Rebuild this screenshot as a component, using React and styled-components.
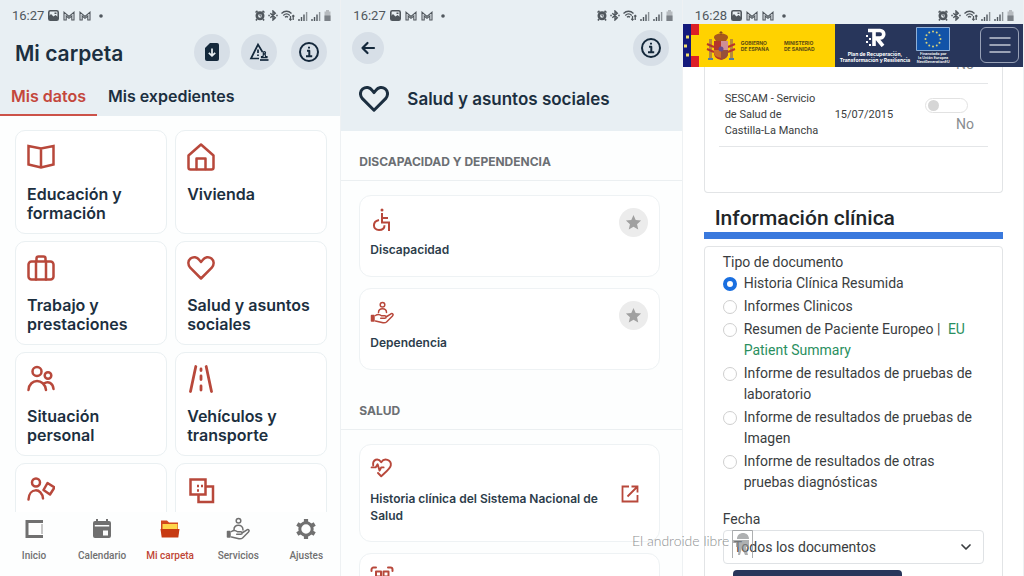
import React, { useState } from 'react';
import styled, { createGlobalStyle } from 'styled-components';

const GlobalStyle = createGlobalStyle`
  * {
    box-sizing: border-box;
  }
  body {
    margin: 0;
    background: #fdfefe;
    font-family: Inter, "Liberation Sans", sans-serif;
    color: #1c2f40;
  }
  button, input, select {
    font: inherit;
    color: inherit;
    margin: 0;
  }
  svg {
    display: block;
    flex: none;
  }
`;

const Screens = styled.main`
  position: relative;
  display: grid;
  grid-template-columns: repeat(3, minmax(0, 1fr));
  height: 100vh;
  overflow: hidden;
`;

const Screen = styled.section`
  display: flex;
  flex-direction: column;
  min-height: 0;
  overflow: hidden;
  border-right: 1px solid #eef1f3;
`;

const Status = styled.div`
  display: flex;
  align-items: center;
  justify-content: space-between;
  height: ${(p) => (p.$short ? '24px' : '30px')};
  padding: ${(p) => (p.$short ? '7px' : '1px')} 9px 0 12px;
  flex: none;
  background: #e8eff3;
  color: #50575d;
  font: 13px/16px Roboto, sans-serif;
`;

const StatusGroup = styled.div`
  display: flex;
  align-items: center;
  gap: ${(p) => p.$gap || '4px'};
`;

const Header = styled.header`
  background: #e8eff3;
  flex: none;
`;

const TitleRow = styled.div`
  display: flex;
  align-items: center;
  gap: 11px;
  padding: 4px 13px 0 15px;
`;

const Title = styled.h1`
  flex: 1;
  margin: 0;
  padding-top: 4px;
  font-size: 21px;
  line-height: 28px;
  font-weight: 600;
`;

const RoundButton = styled.button`
  display: grid;
  place-items: center;
  width: ${(p) => p.$size || '36px'};
  height: ${(p) => p.$size || '36px'};
  padding: 0;
  border: 0;
  border-radius: 50%;
  flex: none;
  background: ${(p) => (p.$gray ? '#ececec' : '#d7dfe7')};
  color: ${(p) => (p.$gray ? '#a0a0a0' : '#14283b')};
  cursor: pointer;
`;

const InfoSlot = styled.div`
  padding-left: 3px;
`;

const Tabs = styled.nav`
  display: flex;
  padding-top: 6px;
`;

const Tab = styled.button`
  height: 40px;
  padding: 2px 11px 0;
  border: 0;
  border-bottom: 2px solid ${(p) => (p.$active ? '#cc5249' : 'transparent')};
  background: none;
  color: ${(p) => (p.$active ? '#c4473c' : '#1c2f40')};
  font-size: 16px;
  line-height: 20px;
  font-weight: 600;
  cursor: pointer;
`;

const Tiles = styled.div`
  flex: 1;
  min-height: 0;
  overflow: hidden;
  display: grid;
  grid-template-columns: 1fr 1fr;
  grid-auto-rows: max-content;
  gap: 7px 8px;
  padding: 14px 13px 0 15px;
`;

const Tile = styled.button`
  display: flex;
  flex-direction: column;
  gap: 14px;
  min-height: 104px;
  padding: 12px 11px 9px;
  border: 1px solid #eaf0f2;
  border-radius: 10px;
  background: #fff;
  text-align: left;
  font-size: 16px;
  line-height: 19px;
  font-weight: 600;
  cursor: pointer;
  svg {
    color: #b8483b;
  }
`;

const BottomNav = styled.nav`
  display: grid;
  grid-template-columns: repeat(5, 1fr);
  height: 64px;
  flex: none;
  background: #fdfefe;
`;

const NavButton = styled.button`
  display: flex;
  flex-direction: column;
  align-items: center;
  gap: 7px;
  padding: 5px 0 0;
  border: 0;
  background: none;
  color: ${(p) => (p.$active ? '#bf4535' : '#707070')};
  font: 500 10px/16px Roboto, sans-serif;
  white-space: nowrap;
  cursor: pointer;
`;

const BackRow = styled.div`
  display: flex;
  align-items: center;
  justify-content: space-between;
  padding: 0 13px 0 11px;
`;

const AreaTitle = styled.div`
  display: flex;
  align-items: center;
  gap: 18px;
  padding: 17px 18px 16px;
`;

const AreaName = styled.h1`
  margin: 0;
  font-size: 17px;
  line-height: 32px;
  font-weight: 600;
`;

const GroupName = styled.h2`
  margin: 0;
  padding: 22px 18px 9px;
  border-bottom: 1px solid #ebeff1;
  color: #6b6f73;
  font-size: 12px;
  line-height: 18px;
  font-weight: 700;
`;

const Group = styled.div`
  display: flex;
  flex-direction: column;
  flex: none;
  gap: 11px;
  padding: 14px 22px 10px 18px;
`;

const Entry = styled.article`
  display: flex;
  align-items: ${(p) => (p.$center ? 'center' : 'flex-start')};
  justify-content: space-between;
  min-height: 82px;
  padding: 12px ${(p) => (p.$center ? '20px' : '11px')} 17px 10px;
  border: 1px solid #eef2f4;
  border-radius: 12px;
  background: #fff;
`;

const EntryText = styled.div`
  display: flex;
  flex-direction: column;
  gap: 9px;
  color: #b8483b;
`;

const EntryName = styled.h3`
  margin: 0;
  color: #2d3d4b;
  font-size: 12px;
  line-height: 17px;
  font-weight: 600;
`;

const ExternalLink = styled.a`
  padding-top: 6px;
  color: #b8483b;
`;

const Banner = styled.header`
  display: flex;
  height: 43px;
  flex: none;
  background: #28365b;
`;

const Government = styled.div`
  display: flex;
  align-items: center;
  width: 136px;
  background: #ffd200;
  color: #5b4a12;
  font-size: 5px;
  line-height: 6px;
  font-weight: 700;
`;

const Ministry = styled.span`
  white-space: pre-line;
  margin-left: ${(p) => p.$space};
`;

const Logo = styled.div`
  display: flex;
  flex-direction: column;
  align-items: center;
  color: #fff;
  font-family: ${(p) => (p.$tiny ? 'Roboto, sans-serif' : 'inherit')};
  font-size: ${(p) => (p.$tiny ? '4px' : '5px')};
  line-height: ${(p) => (p.$tiny ? '4px' : '6px')};
  font-weight: ${(p) => (p.$tiny ? '500' : '700')};
  text-align: center;
  white-space: pre;
  padding-top: 3px;
  gap: ${(p) => (p.$tiny ? '1px' : '4px')};
`;

const Funding = styled.div`
  flex: 1;
  display: flex;
  gap: 6px;
  padding-left: 5px;
`;

const MenuButton = styled.button`
  display: grid;
  place-items: center;
  width: 39px;
  height: 36px;
  margin: 3px 4px 0 0;
  padding: 0;
  border: 1px solid #98a1b6;
  border-radius: 6px;
  background: none;
  color: #c0c6d3;
  cursor: pointer;
`;

const Page = styled.div`
  flex: 1;
  min-height: 0;
  overflow: hidden;
  padding: 0 20px 0 21px;
  background: #fff;
  color: #3a3d40;
  font: 14px/21px Roboto, sans-serif;
`;

const Panel = styled.div`
  border: 1px solid #e2e4e6;
  border-radius: ${(p) => (p.$continued ? '0 0 4px 4px' : '4px')};
  border-top-width: ${(p) => (p.$continued ? '0' : '1px')};
  padding: ${(p) => (p.$continued ? '0 14px 45px' : '5px 18px 20px')};
`;

const Services = styled.table`
  width: 100%;
  margin-top: -11px;
  border-collapse: collapse;
  font-size: 11px;
  line-height: 16px;
`;

const Cell = styled.td`
  width: ${(p) => p.$width || 'auto'};
  padding: ${(p) => (p.$first ? '0 6px 11px' : '7px 6px')};
  border-bottom: 1px solid #e4e6e8;
`;

const SwitchField = styled.label`
  display: flex;
  flex-direction: column;
  align-items: flex-end;
  gap: 3px;
  padding-right: 8px;
  color: #888c90;
  font-size: 14px;
`;

const Switch = styled.input`
  appearance: none;
  display: flex;
  align-items: center;
  width: 43px;
  height: 15px;
  margin-right: 6px;
  padding: 0 2px;
  border: 1px solid #e2e2e2;
  border-radius: 8px;
  &::before {
    content: '';
    width: 11px;
    height: 11px;
    border-radius: 50%;
    background: #d6d6d6;
  }
  &:checked {
    justify-content: flex-end;
  }
`;

const PageHeading = styled.h2`
  margin: 12px 0 7px;
  padding: 0 11px;
  border-bottom: 7px solid #3a79dd;
  color: #222629;
  font-size: 21px;
  line-height: 27px;
  font-weight: 500;
`;

const Choices = styled.fieldset`
  display: flex;
  flex-direction: column;
  gap: 2px;
  margin: 0;
  padding: 0;
  border: 0;
  legend {
    padding: 0;
  }
`;

const Choice = styled.label`
  display: flex;
  align-items: flex-start;
  gap: 7px;
`;

const Radio = styled.input`
  appearance: none;
  flex: none;
  width: 14px;
  height: 14px;
  margin-top: 4px;
  border: 1px solid #cfcfcf;
  border-radius: 50%;
  background: #fff;
  &:checked {
    border: 4px solid #1a6fe0;
  }
`;

const Green = styled.span`
  margin-left: 4px;
  color: #2a8f60;
`;

const FieldLabel = styled.label`
  display: block;
  margin-top: 16px;
`;

const SelectBox = styled.div`
  display: grid;
  align-items: center;
  svg {
    grid-area: 1 / 1;
    justify-self: end;
    margin-right: 12px;
    pointer-events: none;
  }
`;

const Select = styled.select`
  grid-area: 1 / 1;
  appearance: none;
  width: 100%;
  height: 34px;
  padding: 0 30px 0 10px;
  border: 1px solid #dfe2e5;
  border-radius: 4px;
  background: none;
`;

const SearchButton = styled.button`
  display: block;
  width: 169px;
  height: 34px;
  margin: 6px 0 0 10px;
  border: 0;
  border-radius: 4px;
  background: #28365b;
`;

const Watermark = styled.div`
  position: absolute;
  left: 632px;
  bottom: 18px;
  display: flex;
  align-items: flex-start;
  gap: 3px;
  color: #8d9092;
  font: 300 14px/22px Lato, sans-serif;
  pointer-events: none;
`;

const Line = ({ size = 28, width = 2, view = 28, children }) => (
  <svg width={size} height={size} viewBox={`0 0 ${view} ${view}`} fill="none" stroke="currentColor"
    strokeWidth={width} strokeLinecap="round" strokeLinejoin="round" aria-hidden="true">
    {children}
  </svg>
);

const heart = 'M14 24.500L3.200 13.700C.6 10.600.8 6.700 3.500 4.500c2.900-2.200 6.700-1.400 8.600 1.200L14 8l1.900-2.300c2-2.600 5.800-3.400 8.600-1.200 2.700 2.200 2.900 6.100.3 9.200z';

const InfoIcon = () => (
  <Line size={22} view={22}>
    <circle cx="11" cy="11" r="9" />
    <path d="M9 9.800h2.300v5.200M8 15.200h6.200M11 5.800v1.600" strokeLinecap="butt" />
  </Line>
);

const FileIcon = () => (
  <svg width="18" height="20" viewBox="0 0 18 20" aria-hidden="true">
    <path d="M7 1h7a2 2 0 0 1 2 2v14a2 2 0 0 1-2 2H4a2 2 0 0 1-2-2V6z" fill="#14283b" />
    <path d="M9 6.500v7M5.800 10.800L9 13.800l3.200-3" fill="none" stroke="#e8eff4" strokeWidth="1.700" />
  </svg>
);

const AlertIcon = () => (
  <svg width="20" height="20" viewBox="0 0 20 20" fill="none" stroke="currentColor" strokeWidth="1.700" aria-hidden="true">
    <path d="M10 16.500H2L9 2.500l4.500 7.500M9 7.500v3.500M9 12.500V14" />
    <path d="M11 18h8.500" />
    <path d="M12.500 15.700v-1h1.500l.4-2.700h1.700l.4 2.700h1.500v1z" strokeWidth="1.200" />
    <circle cx="15.300" cy="10.800" r="1.200" strokeWidth="1.200" />
  </svg>
);

const HandIcon = ({ size = 24, person }) => (
  <Line size={size} view={24} width={1.500}>
    <circle cx="12.500" cy="3.700" r="2.300" />
    {person
      ? <path d="M8.500 11.500c0-5 8-5 8 0" />
      : <path d="M8 13c-.5-6.500 9-6.500 9 0" />}
    <path d="M5.500 14.500c2-1.500 4-1.500 6 .2h3.200c2 0 2 2.600 0 2.600h-4M16 16l5-3.200c1.800-.7 2.700 1 1.500 2.200L16.500 21c-1 .8-2 .9-3.500.7L5.500 20" />
    <path d="M1.500 14.500h2.500V20H1.500z" fill="currentColor" />
  </Line>
);

const tiles = [
  ['Educación y formación', <path strokeLinejoin="miter" d="M14 5.500v19M14 5.500L1.500 3v18.500L14 24.500l12.500-3V3z" />],
  ['Vivienda', <><path d="M1.500 12.500L14 1.500l12.500 11v12a2 2 0 0 1-2 2h-21a2 2 0 0 1-2-2z" /><path d="M9.500 26V15.500h9V26" /></>],
  ['Trabajo y prestaciones', <><rect x="1.500" y="7.500" width="25" height="18" rx="3" /><path d="M9 25.500V7.500M19 25.500V7.500M9.500 7V4.500A2 2 0 0 1 11.500 2.500h5a2 2 0 0 1 2 2V7" /></>],
  ['Salud y asuntos sociales', <path d={heart} />],
  ['Situación personal', <><circle cx="10" cy="6.500" r="4.500" /><circle cx="21" cy="10.500" r="3.300" /><path d="M1.500 25c1-12 16-12 17.500 0M17 18.500c4-3 9-.5 9.500 5.500" /></>],
  ['Vehículos y transporte', <path strokeWidth="2.800" d="M8.800 1.500L3.500 26.500M19.200 1.500L24.500 26.500M14 4v1.500M14 11v3.500M14 21v4" />],
  ['Permisos y licencias', <><circle cx="9" cy="6.500" r="4" /><path d="M1.500 23.500C2 11.500 15 11.500 16 22.500M16.500 14L20.500 7l7 4.500-4.500 7z" /></>],
  ['Otros datos', <><path strokeLinejoin="miter" d="M3.500 3.500h15v15h-15zM19 10.500h7v15.500H11.500V19" /><path strokeLinecap="butt" d="M10 10h2M14 10h2M10 14.500h2" /></>],
];

const navItems = [
  ['Inicio', <svg width="24" height="24" viewBox="0 0 24 24" aria-hidden="true"><path d="M21 4.500H5v15h16" fill="none" stroke="#707070" strokeWidth="3" /><path d="M20 7v10" stroke="#b5b5b5" strokeWidth="1.500" /></svg>],
  ['Calendario', <svg width="24" height="24" viewBox="0 0 24 24" fill="#707070" aria-hidden="true"><path fillRule="evenodd" d="M5 4h1V2h2v2h8V2h2v2h1a2 2 0 0 1 2 2v13a2 2 0 0 1-2 2H5a2 2 0 0 1-2-2V6a2 2 0 0 1 2-2zM4.800 8v1.500h14.400V8zM13 13.500v5h5v-5z" /></svg>],
  ['Mi carpeta', <svg width="24" height="24" viewBox="0 0 24 24" aria-hidden="true"><path d="M3 3.500h6l2 2h9v8H3z" fill="#d1491c" /><path d="M4.500 7h15v5h-15z" fill="#ffd64a" /><path d="M2.500 12h19l-1.200 8.500H3.700z" fill="#c73a12" /></svg>],
  ['Servicios', <HandIcon />],
  ['Ajustes', <svg width="24" height="24" viewBox="0 0 24 24" fill="none" stroke="#707070" aria-hidden="true"><circle cx="12" cy="12" r="6.200" strokeWidth="3" /><path d="M12 2v4M12 18v4M3.300 7l3.500 2M17.200 15l3.500 2M3.300 17l3.500-2M17.200 9l3.500-2" strokeWidth="4.200" /></svg>],
];

const options = [
  'Historia Clínica Resumida',
  'Informes Clinicos',
  <>Resumen de Paciente Europeo | <Green>EU Patient Summary</Green></>,
  'Informe de resultados de pruebas de laboratorio',
  'Informe de resultados de pruebas de Imagen',
  'Informe de resultados de otras pruebas diagnósticas',
];

const MailIcon = () => (
  <svg width="12" height="10" viewBox="0 0 12 10" fill="none" stroke="currentColor" strokeWidth="1.100" aria-hidden="true">
    <path d="M1 9V1.200L6 5.500l5-4.300V9H8.800V5L6 7.300 3.200 5v4z" />
  </svg>
);

const SignalIcon = () => (
  <svg width="10" height="10" viewBox="0 0 10 10" stroke="currentColor" strokeWidth="1.400" aria-hidden="true">
    <path d="M1 10V8M3.500 10V6M6 10V3.500" />
    <path d="M8.600 10V1" opacity=".6" />
  </svg>
);

const StatusBar = ({ time, short }) => (
  <Status $short={short}>
    <StatusGroup>
      <span>{time}</span>
      <svg width="11" height="11" viewBox="0 0 11 11" aria-hidden="true">
        <rect x=".8" y=".8" width="9.400" height="9.400" rx="1.500" fill="none" stroke="currentColor" strokeWidth="1.600" />
        <path d="M1 9V6l2-2 2.500 2.500L7.500 5 10 7v3H1zM6.500 2.500h2v1.500h-2z" fill="currentColor" />
      </svg>
      <MailIcon />
      <MailIcon />
      <svg width="12" height="4" viewBox="0 0 12 4" aria-hidden="true"><circle cx="6" cy="2" r="1.800" fill="currentColor" /></svg>
    </StatusGroup>
    <StatusGroup $gap="3px">
      <svg width="10" height="11" viewBox="0 0 10 11" fill="none" stroke="currentColor" aria-hidden="true">
        <circle cx="5" cy="5.800" r="3.200" strokeWidth="2.600" />
        <path d="M.5 2.500l2-1.700M9.500 2.500l-2-1.700M2 9l-1 1.500M8 9l1 1.500" strokeWidth="1.600" />
        <path d="M5 4v2h1.500" />
      </svg>
      <svg width="10" height="11" viewBox="0 0 10 11" fill="none" stroke="currentColor" strokeWidth="1.400" aria-hidden="true">
        <path d="M2.300 3.200l5 4.600L5 10V1l2.300 2.200-5 4.600M.3 5.500h1.500M8.200 5.500h1.500" />
      </svg>
      <svg width="14" height="11" viewBox="0 0 14 11" fill="none" stroke="currentColor" strokeWidth="1.300" aria-hidden="true">
        <path d="M.5 3.500c3-3 7-3 10 0M2.300 5.500c2-2 4.500-2 6.500 0M4 7.300c1-1 2-1 3 0M9.500 10V6M8.300 8.800L9.500 10l1-1M12.200 5.500v4.500M11.200 6.500l1-1 1.200 1" />
      </svg>
      <SignalIcon />
      <SignalIcon />
      <svg width="7" height="11" viewBox="0 0 7 11" aria-hidden="true">
        <path d="M2 0h3v1.500h1.500V11h-6V1.500H2z" fill="#b6bbbf" />
        <path d="M.5 5.500h6V11h-6z" fill="#7b8187" />
      </svg>
    </StatusGroup>
  </Status>
);

const FavoriteButton = ({ name }) => (
  <RoundButton $gray $size="29px" aria-label={`Favorito: ${name}`}>
    <svg width="17" height="17" viewBox="0 0 24 24" fill="currentColor" aria-hidden="true">
      <path d="M12 1.500l3.100 7 7.600.7-5.700 5.100 1.700 7.500L12 17.900l-6.700 3.900L7 14.300 1.300 9.200l7.600-.7z" />
    </svg>
  </RoundButton>
);

const FolderScreen = () => {
  const [tab, setTab] = useState('Mis datos');
  return (
    <Screen>
      <StatusBar time="16:27" />
      <Header>
        <TitleRow>
          <Title>Mi carpeta</Title>
          <RoundButton aria-label="Descargas"><FileIcon /></RoundButton>
          <RoundButton aria-label="Avisos"><AlertIcon /></RoundButton>
          <InfoSlot>
            <RoundButton aria-label="Información"><InfoIcon /></RoundButton>
          </InfoSlot>
        </TitleRow>
        <Tabs>
          {['Mis datos', 'Mis expedientes'].map((name) => (
            <Tab key={name} $active={tab === name} onClick={() => setTab(name)}>{name}</Tab>
          ))}
        </Tabs>
      </Header>
      <Tiles>
        {tiles.map(([name, icon], index) => (
          <Tile key={name} aria-label={name}>
            <Line width={2.500}>{icon}</Line>
            {index < 6 && <span>{name}</span>}
          </Tile>
        ))}
      </Tiles>
      <BottomNav>
        {navItems.map(([name, icon]) => (
          <NavButton key={name} $active={name === 'Mi carpeta'}>
            {icon}
            {name}
          </NavButton>
        ))}
      </BottomNav>
    </Screen>
  );
};

const HealthScreen = () => (
  <Screen>
    <StatusBar time="16:27" />
    <Header>
      <BackRow>
        <RoundButton $size="32px" aria-label="Volver">
          <Line size={16} view={16} width={2.200}><path d="M14 8H2.500M7.500 3l-5 5 5 5" /></Line>
        </RoundButton>
        <RoundButton aria-label="Información"><InfoIcon /></RoundButton>
      </BackRow>
      <AreaTitle>
        <Line size={30} width={2.800}><path d={heart} /></Line>
        <AreaName>Salud y asuntos sociales</AreaName>
      </AreaTitle>
    </Header>
    <GroupName>DISCAPACIDAD Y DEPENDENCIA</GroupName>
    <Group>
      <Entry>
        <EntryText>
          <Line size={24} view={24} width={2}>
            <circle cx="12" cy="2" r="1.500" fill="currentColor" stroke="none" />
            <path strokeLinecap="butt" strokeLinejoin="miter" d="M12 5v9.500h7V23M12.500 10h5.500M9 12c-7 1.500-6.500 10 0 10 3.500 0 5.500-2 5.500-4.800" />
          </Line>
          <EntryName>Discapacidad</EntryName>
        </EntryText>
        <FavoriteButton name="Discapacidad" />
      </Entry>
      <Entry>
        <EntryText>
          <HandIcon person />
          <EntryName>Dependencia</EntryName>
        </EntryText>
        <FavoriteButton name="Dependencia" />
      </Entry>
    </Group>
    <GroupName>SALUD</GroupName>
    <Group>
      <Entry $center>
        <EntryText>
          <Line size={24} view={30} width={2.400}>
            <path d="M4 10.500C3 3 10 .5 14 6.500c4-6 13-3 12 4-.5 4-6 8-12 13.500l-4-4M2 13h5l2.500-4 2.500 8 2-4h3" />
          </Line>
          <EntryName>Historia clínica del Sistema Nacional de Salud</EntryName>
        </EntryText>
        <ExternalLink href="#historia" aria-label="Abrir historia clínica">
          <Line size={18} view={18} width={1.800}>
            <path strokeLinecap="butt" strokeLinejoin="miter" d="M8 1.500H1.500v15h15V10M6.500 11.500l9.500-9.500M10.500 1.500h6v6" />
          </Line>
        </ExternalLink>
      </Entry>
      <Entry>
        <EntryText>
          <Line size={24} view={24} width={2}>
            <path d="M1.500 5V3.500a2 2 0 0 1 2-2H6M18 1.500h2.500a2 2 0 0 1 2 2V5M6 5.500h5v5H6zM13.500 5.500h5v5h-5zM6 14h5v5H6zM13.500 14h5v5h-5z" />
          </Line>
        </EntryText>
      </Entry>
    </Group>
  </Screen>
);

const CoatOfArms = () => (
  <svg width="30" height="32" viewBox="0 0 30 32" aria-hidden="true">
    <path d="M8 8c-1-6 15-6 14 0l-2 3H10z" fill="#a8591c" />
    <path d="M15 1v4M13.500 2.500h3" stroke="#8a4a1a" />
    <path d="M3 9h3v19H3zM24 9h3v19h-3z" fill="#b98a3a" />
    <path d="M1 14l7 3M1 19l7 3M29 14l-7 3M29 19l-7 3" stroke="#b8352c" strokeWidth="2" />
    <path d="M2 28h5v2H2zM23 28h5v2h-5z" fill="#557ba0" />
    <path d="M8 11h14v12c0 5-4 6-7 7-3-1-7-2-7-7z" fill="#b4372b" />
    <path d="M15 11h7v9h-7z" fill="#cf8f95" />
    <path d="M15 20h7v4c0 3-3 5-7 6z" fill="#96503a" />
    <path d="M8 20h7v8c-4-1-7-2-7-6z" fill="#c9702a" />
    <circle cx="15" cy="19" r="2.500" fill="#6a4a8a" />
  </svg>
);

const euStars = Array.from({ length: 12 }, (_, i) => [
  17 + 7.500 * Math.sin((i * Math.PI) / 6),
  12 - 7.500 * Math.cos((i * Math.PI) / 6),
]);

const RecordsScreen = () => {
  const [choice, setChoice] = useState(0);
  return (
    <Screen>
      <StatusBar time="16:28" short />
      <Banner>
        <svg width="16" height="43" viewBox="0 0 16 43" aria-hidden="true">
          <path d="M0 0h16v43H0z" fill="#ffd200" />
          <path d="M0 0h8v43H0z" fill="#141a7c" />
          <path d="M8 0h8v11H8zM8 32h8v11H8z" fill="#dc1f26" />
          <path d="M3 11.500h3v3H3zM1 20.500h3v3H1zM3 29.500h3v3H3z" fill="#f3e26a" />
        </svg>
        <Government>
          <Ministry as="div" $space="7px"><CoatOfArms /></Ministry>
          <Ministry $space="5px">{'GOBIERNO\nDE ESPAÑA'}</Ministry>
          <Ministry $space="15px">{'MINISTERIO\nDE SANIDAD'}</Ministry>
        </Government>
        <Funding>
          <Logo>
            <svg width="22" height="20" viewBox="0 0 22 20" aria-hidden="true">
              <path d="M4 3.500h12a3.500 3.500 0 0 1 0 7.500h-3.500l6.500 8M10 4v15" fill="none" stroke="#fff" strokeWidth="3.600" />
              <path d="M2 8h2v2H2zM5 11h2v2H5zM2 14h2v2H2zM5 17h2v2H5z" fill="#fff" />
            </svg>
            {'Plan de Recuperación,\nTransformación y Resiliencia'}
          </Logo>
          <Logo $tiny>
            <svg width="34" height="24" viewBox="0 0 34 24" aria-hidden="true">
              <path d="M.5.5h33v23H.5z" fill="#1253a8" stroke="#8fb0d8" />
              {euStars.map(([x, y]) => <circle key={`${x}-${y}`} cx={x} cy={y} r="1" fill="#d9d27a" />)}
            </svg>
            {'Financiado por\nla Unión Europea\nNextGenerationEU'}
          </Logo>
        </Funding>
        <MenuButton aria-label="Menú">
          <Line size={22} view={22} width={1.500}><path d="M1 4h20M1 11h20M1 18h20" /></Line>
        </MenuButton>
      </Banner>
      <Page>
        <Panel $continued>
          <Services>
            <tbody>
              <tr>
                <Cell $first $width="110px" />
                <Cell $first />
                <Cell $first><SwitchField as="div">No</SwitchField></Cell>
              </tr>
              <tr>
                <Cell>SESCAM - Servicio<br />de Salud de<br />Castilla-La Mancha</Cell>
                <Cell>15/07/2015</Cell>
                <Cell>
                  <SwitchField>
                    <Switch type="checkbox" role="switch" />
                    No
                  </SwitchField>
                </Cell>
              </tr>
            </tbody>
          </Services>
        </Panel>
        <PageHeading>Información clínica</PageHeading>
        <Panel>
          <Choices>
            <legend>Tipo de documento</legend>
            {options.map((label, index) => (
              <Choice key={index}>
                <Radio type="radio" name="tipo" checked={choice === index} onChange={() => setChoice(index)} />
                <span>{label}</span>
              </Choice>
            ))}
          </Choices>
          <FieldLabel htmlFor="fecha">Fecha</FieldLabel>
          <SelectBox>
            <Select id="fecha">
              <option>Todos los documentos</option>
            </Select>
            <Line size={12} view={12} width={1.700}><path d="M2 4l4 4 4-4" /></Line>
          </SelectBox>
          <SearchButton aria-label="Buscar" />
        </Panel>
      </Page>
    </Screen>
  );
};

const App = () => (
  <>
    <GlobalStyle />
    <Screens>
      <FolderScreen />
      <HealthScreen />
      <RecordsScreen />
      <Watermark>
        <span>El androide libre</span>
        <svg width="21" height="28" viewBox="0 0 21 28" opacity=".7" aria-hidden="true">
          <path d="M.5 28V.5h20V28" fill="none" stroke="#8c8f91" />
          <path d="M5 9c0-8 12-8 12 0zM4 10h13v7h-3l2 8h-3l-3-7-2 7H6l1-8H4zM0 10h4v3H0z" fill="#8c8f91" />
        </svg>
      </Watermark>
    </Screens>
  </>
);

export default App;
